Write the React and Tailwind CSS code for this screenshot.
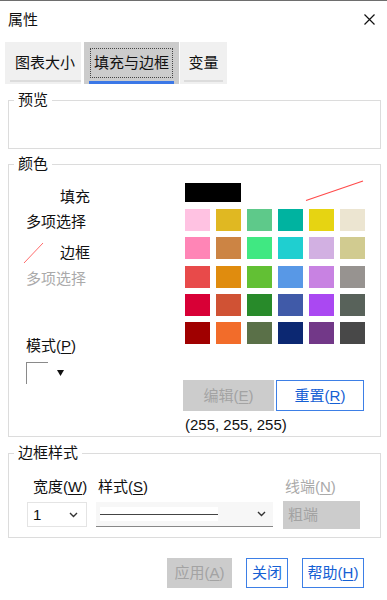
import React from 'react';

const swatches = [
  ['#ffc2e2', '#e0b822', '#5ec98a', '#00b3a0', '#e6d412', '#ece5d1'],
  ['#ff85b6', '#cc8444', '#40e882', '#1fcfd0', '#d2b0e2', '#d1cb90'],
  ['#e84a4a', '#e08c0e', '#62c034', '#5898e6', '#c882e2', '#979390'],
  ['#d80036', '#d05234', '#288a2a', '#405aa8', '#aa48f2', '#58625a'],
  ['#a00000', '#f26c2a', '#5a7048', '#0c2872', '#723888', '#484848'],
];

// 助记键 (E) (R) ...
function Key({ ch }) {
  return (
    <span>
      (<u className="underline-offset-2">{ch}</u>)
    </span>
  );
}

function Chevron() {
  return (
    <svg width="9" height="6" viewBox="0 0 9 6">
      <polyline points="1,1 4.5,4.5 8,1" fill="none" stroke="#333" strokeWidth="1.4" />
    </svg>
  );
}

function Group({ title, className, children }) {
  return (
    <fieldset className={`ml-[8px] w-[373px] border border-[#dcdcdc] ${className}`}>
      <legend className="ml-[5px] px-[4px] text-[15px] leading-[20px]">{title}</legend>
      {children}
    </fieldset>
  );
}

export default function App() {
  return (
    <div className="w-[387px] h-[600px] overflow-hidden bg-white border-t border-[#6e6e6e] text-[#111] text-[15px] leading-[20px] font-[family-name:'Liberation_Sans','Noto_Sans_CJK_SC',sans-serif]">
      {/* 标题栏 */}
      <div className="h-[37px] flex items-center justify-between pl-[8px] pr-[12px]">
        <span className="text-[15px]">属性</span>
        <svg width="11" height="11" viewBox="0 0 11 11">
          <path d="M0.5 0.5 L10.5 10.5 M10.5 0.5 L0.5 10.5" stroke="#111" strokeWidth="1.2" />
        </svg>
      </div>

      {/* 选项卡 */}
      <div className="mt-[4px] ml-[5px] flex h-[42px]">
        <div className="w-[76px] bg-[#f0f0f0] flex flex-col">
          <div className="flex-1 flex items-center justify-center pt-[4px] pl-[4px]">图表大小</div>
          <div className="h-[2px] ml-[5px] mb-[2px] bg-[#dcdcdc]" />
        </div>
        <div className="ml-[3px] w-[95px] bg-[#cccccc] flex flex-col">
          <div className="flex-1 flex items-center justify-center pt-[3px]">
            <span className="h-[30px] flex items-center px-[3px] border border-dotted border-[#444]">填充与边框</span>
          </div>
          <div className="h-[3px] mx-[5px] bg-[#3b78e7]" />
        </div>
        <div className="ml-[1px] w-[47px] bg-[#f0f0f0] flex flex-col">
          <div className="flex-1 flex items-center justify-center pt-[4px]">变量</div>
          <div className="h-[2px] mx-[4px] mb-[2px] bg-[#dcdcdc]" />
        </div>
      </div>

      {/* 预览 */}
      <Group title="预览" className="mt-[6px] h-[59px]" />

      {/* 颜色 */}
      <Group title="颜色" className="mt-[5px] h-[283px]">
        <div className="flex">
          <div className="w-[176px] flex flex-col">
            <div className="mt-[13px] pl-[51px]">填充</div>
            <div className="mt-[5px] pl-[17px]">多项选择</div>
            <div className="mt-[10px] flex items-center">
              <svg width="22" height="22" viewBox="0 0 22 22" className="ml-[14px]">
                <line x1="1" y1="21" x2="20" y2="1" stroke="#ff6b6b" strokeWidth="1" />
              </svg>
              <span className="ml-[15px]">边框</span>
            </div>
            <div className="mt-[5px] pl-[17px] text-[#aaaaaa]">多项选择</div>
            <div className="mt-[47px] pl-[17px]">
              模式<Key ch="P" />
            </div>
            <div className="mt-[6px] ml-[17px] flex items-center">
              <div className="w-[22px] h-[22px] border-t border-l border-[#8a8a8a]" />
              <svg width="7" height="6" viewBox="0 0 7 6" className="ml-[9px]">
                <polygon points="0,0 7,0 3.5,6" fill="#111" />
              </svg>
            </div>
          </div>

          <div className="flex flex-col">
            <div className="mt-[6px] flex items-end">
              <div className="w-[56px] h-[19px] bg-black" />
              <svg width="60" height="22" viewBox="0 0 60 22" className="ml-[64px]">
                <line x1="1" y1="20.5" x2="58" y2="1" stroke="#ff4b4b" strokeWidth="1.2" />
              </svg>
            </div>
            <div className="mt-[7px] grid grid-cols-[repeat(6,25px)] gap-x-[6px] gap-y-[6.3px]">
              {swatches.flat().map((c, i) => (
                <div key={i} className="h-[22px]" style={{ backgroundColor: c }} />
              ))}
            </div>
            <div className="mt-[36px] -ml-[2px] flex">
              <div className="w-[91px] h-[31px] bg-[#cccccc] text-[#a3a3a3] flex items-center justify-center">
                编辑<Key ch="E" />
              </div>
              <div className="ml-[2px] w-[88px] h-[31px] border border-[#3d7fe6] text-[#1560d4] flex items-center justify-center">
                重置<Key ch="R" />
              </div>
            </div>
            <div className="mt-[4px]">(255, 255, 255)</div>
          </div>
        </div>
      </Group>

      {/* 边框样式 */}
      <Group title="边框样式" className="mt-[6px] h-[95px]">
        <div className="mt-[14px] flex">
          <div className="ml-[18px] w-[60px] flex flex-col">
            <div className="pl-[6px] whitespace-nowrap">
              宽度<Key ch="W" />
            </div>
            <div className="mt-[5px] h-[25px] border border-[#e4e4e4] flex items-center justify-between pl-[5px] pr-[8px]">
              <span>1</span>
              <Chevron />
            </div>
          </div>
          <div className="ml-[9px] w-[177px] flex flex-col">
            <div className="pl-[2px] whitespace-nowrap">
              样式<Key ch="S" />
            </div>
            <div className="mt-[5px] h-[25px] bg-[#f7f7f7] border-b border-[#888] flex items-center justify-between pl-[4px] pr-[7px]">
              <div className="w-[118px] h-[14px] bg-white flex items-center">
                <div className="w-full h-[1px] bg-[#444]" />
              </div>
              <Chevron />
            </div>
          </div>
          <div className="ml-[10px] w-[77px] flex flex-col">
            <div className="pl-[2px] whitespace-nowrap text-[#aaaaaa]">
              线端<Key ch="N" />
            </div>
            <div className="mt-[4px] h-[28px] bg-[#cccccc] text-[#a3a3a3] flex items-center pl-[5px]">粗端</div>
          </div>
        </div>
      </Group>

      {/* 底部按钮 */}
      <div className="mt-[20px] pr-[23px] flex justify-end gap-[14px]">
        <div className="w-[65px] h-[30px] bg-[#cccccc] text-[#a3a3a3] flex items-center justify-center">
          应用<Key ch="A" />
        </div>
        <div className="w-[42px] h-[30px] border border-[#3d7fe6] text-[#1560d4] flex items-center justify-center">
          关闭
        </div>
        <div className="w-[62px] h-[30px] border border-[#3d7fe6] text-[#1560d4] flex items-center justify-center">
          帮助<Key ch="H" />
        </div>
      </div>
    </div>
  );
}
